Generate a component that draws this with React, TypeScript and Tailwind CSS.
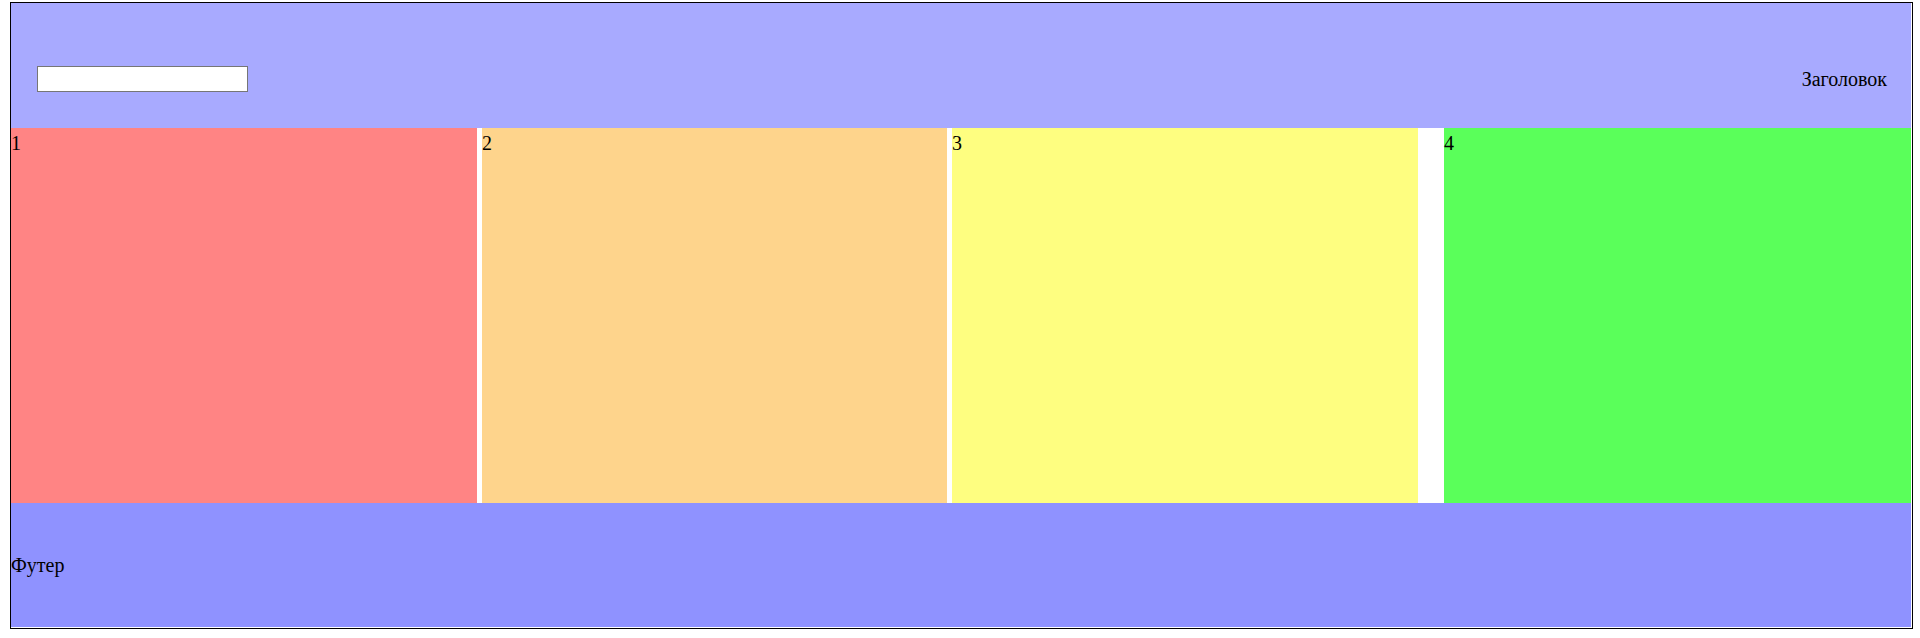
export default function App() {
  return (
    <div className="min-h-screen bg-white pt-[2px] pl-[10px] font-['Liberation_Serif',serif] text-[20px] text-black">
      <div className="w-[1903px] h-[627px] border border-black">
        {/* Header */}
        <div className="w-[1900px] h-[125px] bg-[#a8aaff] flex items-center justify-between pt-[26px] pl-[26px] pr-[24px]">
          <input
            type="text"
            className="w-[211px] h-[26px] bg-white border border-[#767676] outline-none"
          />
          <span>Заголовок</span>
        </div>

        {/* Columns */}
        <div className="w-[1900px] h-[375px] flex">
          <div className="w-[466px] bg-[#ff8484]">1</div>
          <div className="w-[5px]" />
          <div className="w-[465px] bg-[#fed48c]">2</div>
          <div className="w-[5px]" />
          <div className="w-[466px] bg-[#fefe80]">3</div>
          <div className="w-[26px]" />
          <div className="w-[467px] bg-[#5aff5a]">4</div>
        </div>

        {/* Footer */}
        <div className="w-[1900px] h-[124px] bg-[#8f92ff] flex items-center">
          <span>Футер</span>
        </div>
      </div>
    </div>
  );
}
